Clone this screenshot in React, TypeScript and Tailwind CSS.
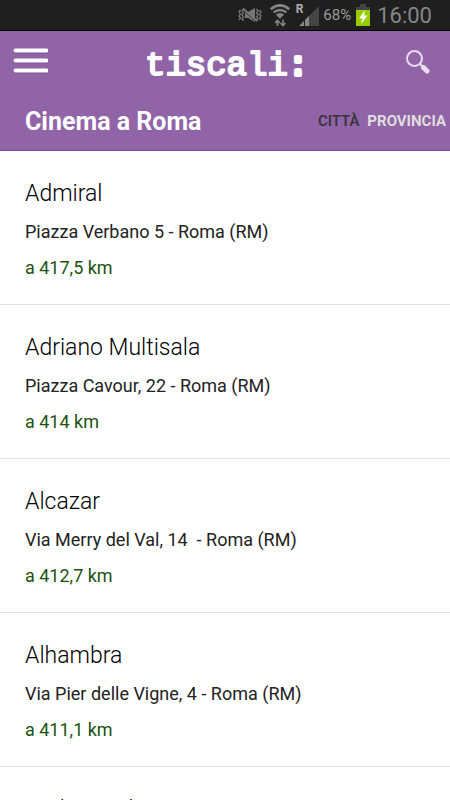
const cinemas = [
  { name: 'Admiral', address: 'Piazza Verbano 5 - Roma (RM)', distance: 'a 417,5 km' },
  { name: 'Adriano Multisala', address: 'Piazza Cavour, 22 - Roma (RM)', distance: 'a 414 km' },
  { name: 'Alcazar', address: 'Via Merry del Val, 14\u00a0 - Roma (RM)', distance: 'a 412,7 km' },
  { name: 'Alhambra', address: 'Via Pier delle Vigne, 4 - Roma (RM)', distance: 'a 411,1 km' },
  { name: 'Ambassade', address: '', distance: '' },
]

interface Cinema {
  name: string
  address: string
  distance: string
}

export default function App() {
  return (
    <div className="h-screen overflow-hidden bg-white font-['Roboto',sans-serif]">
      <StatusBar />
      <Header />
      <main>
        <ul>
          {cinemas.map((cinema) => (
            <CinemaRow key={cinema.name} cinema={cinema} />
          ))}
        </ul>
      </main>
    </div>
  )
}

function StatusBar() {
  return (
    <div className="flex h-[31px] items-center justify-end border-b border-black bg-[#1f1f1f] pr-[18px] text-[#868686]">
      {/* Vibration off */}
      <svg className="h-5 w-6" viewBox="0 0 24 20" fill="none" stroke="#777" strokeWidth="1.300">
        <path d="M2.500 5L1 7l1.500 2L1 11l1.500 2L1 15M5.500 4L4 6l1.500 2L4 10l1.500 2L4 14l1.500 2M21.500 5L23 7l-1.500 2 1.500 2-1.500 2 1.500 2M18.500 4L20 6l-1.500 2 1.500 2-1.500 2 1.500 2-1.500 2" />
        <path d="M7 7h3l7-4v14l-7-4H7z" fill="#777" stroke="none" />
        <path d="M6 5.500L18 16" stroke="#1f1f1f" strokeWidth="1.500" />
        <path d="M5 3.500L19 16" strokeWidth="2" />
      </svg>
      {/* Wifi */}
      <svg className="ml-2 h-6 w-5" viewBox="0 0 20 24" fill="none" stroke="#868686">
        <path d="M.8 6.200q9.200-7.600 18.400 0" strokeWidth="2.600" />
        <path d="M3.600 9.400q6.400-5 12.800 0" strokeWidth="2.400" />
        <path d="M5.800 11.600q4.200-3 8.400 0L10 15.800z" fill="#868686" stroke="none" />
        <path d="M7.500 23v-5M5 20l2.500-2.500L10 20M13 16.500v5.500M10.500 20l2.500 2.500L15.500 20" strokeWidth="1.600" />
      </svg>
      {/* Roaming signal */}
      <div className="ml-1.5 flex items-center">
        <span className="-mr-1 mb-3 text-xs font-bold text-[#b0b0b0]">R</span>
        <svg className="h-6 w-5" viewBox="0 0 20 24">
          <path d="M0 23L20 3v20z" fill="#444" />
          <path d="M0 23l5-5v5zM6 23v-6l4-4v10z" fill="#868686" />
          <path d="M5.500 17v6" stroke="#1f1f1f" />
        </svg>
      </div>
      <span className="ml-1 text-[15px] text-[#9a9a9a]">68%</span>
      {/* Battery */}
      <svg className="ml-1 h-6 w-4" viewBox="0 0 16 24">
        <path d="M5 1h6v3h4v4H1V4h4z" fill="#444" />
        <path d="M1 7h14v16H1z" fill="#99cc00" />
        <path d="M10 7L4 15.500h3.500L6 21l6.500-8.500H9z" fill="#fff" />
      </svg>
      <span className="ml-1.5 text-[22px]">16:00</span>
    </div>
  )
}

function Header() {
  return (
    <header className="border-b border-[#7d48a0] bg-[#9164a8] text-white">
      <div className="flex h-[62px] items-center justify-between pr-5 pl-3">
        <button aria-label="Menu" className="pb-1">
          <svg className="h-8 w-9" viewBox="0 0 36 32" stroke="#fff" strokeWidth="4" strokeLinecap="round">
            <path d="M3.500 7.500h31M3.500 17.500h31M3.500 27.500h31" stroke="#7d5295" />
            <path d="M3.500 6.500h31M3.500 16.500h31M3.500 26.500h31" />
          </svg>
        </button>
        <a href="#">
          <svg className="h-11 w-[168px]" viewBox="0 0 168 44">
            <text
              x="2"
              y="35"
              className="font-['Liberation_Mono',monospace] text-[34px]"
              fill="#fff"
              stroke="#fff"
              strokeWidth="2"
              strokeLinejoin="round"
            >
              tiscali<tspan strokeWidth="4">:</tspan>
            </text>
          </svg>
        </a>
        <button aria-label="Cerca">
          <svg className="h-6 w-6" viewBox="0 0 24 24" fill="none" stroke="#e8dcee" strokeLinecap="round">
            <circle cx="8.500" cy="8.500" r="7.500" strokeWidth="2" />
            <path d="M14 14l3 3" strokeWidth="2" />
            <path d="M17.500 17.500l3.500 3.500" strokeWidth="5" />
          </svg>
        </button>
      </div>
      <div className="flex h-[57px] items-center justify-between pr-1 pl-[25px]">
        <h1 className="text-[25px] font-bold">Cinema a Roma</h1>
        <div className="flex gap-2 text-[15px] font-bold">
          <button className="font-medium text-[#333]">CITTÀ</button>
          <button className="text-[#dedede]">PROVINCIA</button>
        </div>
      </div>
    </header>
  )
}

function CinemaRow({ cinema }: { cinema: Cinema }) {
  return (
    <li className="min-h-[154px] border-b border-[#e2e2e2] px-[25px] pt-[25px]">
      <h2 className="text-[23px] leading-9 font-light text-black">{cinema.name}</h2>
      <p className="mt-0.5 text-lg leading-9 text-[#222]">{cinema.address}</p>
      <p className="text-lg leading-9 text-[#1c5212]">{cinema.distance}</p>
    </li>
  )
}
